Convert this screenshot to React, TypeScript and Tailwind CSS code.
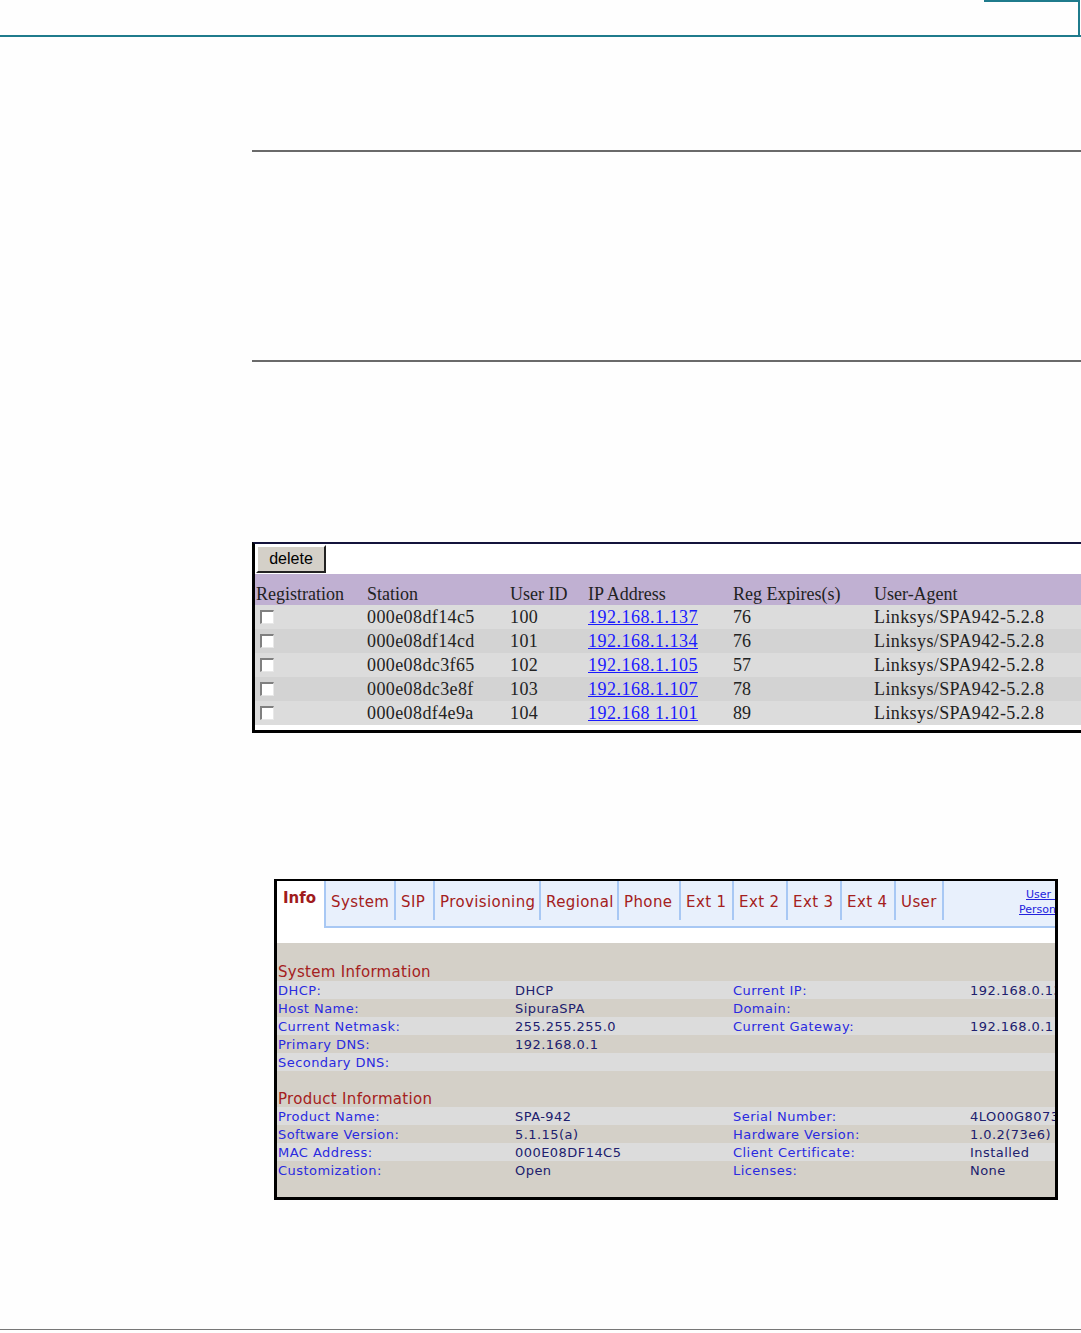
import React from "react";

const regRows = [
  { station: "000e08df14c5", id: "100", ip: "192.168.1.137", exp: "76" },
  { station: "000e08df14cd", id: "101", ip: "192.168.1.134", exp: "76" },
  { station: "000e08dc3f65", id: "102", ip: "192.168.1.105", exp: "57" },
  { station: "000e08dc3e8f", id: "103", ip: "192.168.1.107", exp: "78" },
  { station: "000e08df4e9a", id: "104", ip: "192.168 1.101", exp: "89" },
];

const tabs = [
  { name: "System", w: "w-[70px]" },
  { name: "SIP", w: "w-[39px]" },
  { name: "Provisioning", w: "w-[106px]" },
  { name: "Regional", w: "w-[78px]" },
  { name: "Phone", w: "w-[62px]" },
  { name: "Ext 1", w: "w-[53px]" },
  { name: "Ext 2", w: "w-[54px]" },
  { name: "Ext 3", w: "w-[54px]" },
  { name: "Ext 4", w: "w-[54px]" },
  { name: "User", w: "w-[48px]" },
];

const systemRows: [string, string, string, string][] = [
  ["DHCP:", "DHCP", "Current IP:", "192.168.0.131"],
  ["Host Name:", "SipuraSPA", "Domain:", ""],
  ["Current Netmask:", "255.255.255.0", "Current Gateway:", "192.168.0.1"],
  ["Primary DNS:", "192.168.0.1", "", ""],
  ["Secondary DNS:", "", "", ""],
];

const productRows: [string, string, string, string][] = [
  ["Product Name:", "SPA-942", "Serial Number:", "4LO00G807366"],
  ["Software Version:", "5.1.15(a)", "Hardware Version:", "1.0.2(73e6)"],
  ["MAC Address:", "000E08DF14C5", "Client Certificate:", "Installed"],
  ["Customization:", "Open", "Licenses:", "None"],
];

function Checkbox() {
  return (
    <span className="mt-[-4px] ml-[5px] inline-block h-[14px] w-[14px] border-t-2 border-l-2 border-t-[#808080] border-l-[#808080] border-b border-r border-b-[#e8e8e8] border-r-[#e8e8e8] bg-white align-middle" />
  );
}

function InfoRows({ rows }: { rows: [string, string, string, string][] }) {
  return (
    <>
      {rows.map((r, i) => (
        <div
          key={r[0]}
          className={`grid h-[18px] grid-cols-[237px_218px_237px_1fr] items-center whitespace-nowrap pl-px tracking-[0.45px] ${
            i % 2 === 0 ? "bg-[#dcdcdc]" : "bg-[#d4d0c8]"
          }`}
        >
          <span className="text-[#2a2ae0]">{r[0]}</span>
          <span className="text-[#20206e]">{r[1]}</span>
          <span className="text-[#2a2ae0]">{r[2]}</span>
          <span className="text-[#20206e]">{r[3]}</span>
        </div>
      ))}
    </>
  );
}

export default function App() {
  return (
    <div className="w-[1081px] h-[1333px] overflow-hidden bg-[#fefefe]">
      <div className="flex h-[37px] justify-end border-b-2 border-[#1f7b8c]">
        <div className="mr-px h-full w-[96px] border-t-2 border-r-2 border-[#1f7b8c]" />
      </div>

      <div className="pl-[252px]">
        <div className="mt-[113px] h-[210px] border-t-2 border-[#6a6a6a]" />
        <div className="border-t-2 border-[#6a6a6a]" />

        <div className="mt-[180px] w-[860px] border-t-2 border-l-[3px] border-b-[3px] border-t-[#14143c] border-l-black border-b-black bg-white font-['Liberation_Serif',serif] text-[18px] text-[#222]">
          <div className="h-[30px] pt-px pl-px">
            <button
              type="button"
              className="h-[28px] w-[70px] border-2 border-t-white border-l-white border-b-[#222] border-r-[#222] bg-[#d4d0c8] font-['Liberation_Sans',sans-serif] text-[16px] leading-none text-black"
            >
              delete
            </button>
          </div>
          <div className="grid h-[31px] grid-cols-[112px_143px_78px_145px_141px_1fr] items-end bg-[#c0b0d2] pb-[2px] leading-none">
            <span className="pl-px">Registration</span>
            <span>Station</span>
            <span>User ID</span>
            <span>IP Address</span>
            <span>Reg Expires(s)</span>
            <span>User-Agent</span>
          </div>
          {regRows.map((r, i) => (
            <div
              key={r.station}
              className={`grid h-[24px] grid-cols-[112px_143px_78px_145px_141px_1fr] items-center leading-none ${
                i % 2 === 0 ? "bg-[#dcdcdc]" : "bg-[#d3d3d3]"
              }`}
            >
              <span>
                <Checkbox />
              </span>
              <span className="tracking-[0.4px]">{r.station}</span>
              <span className="tracking-[0.4px]">{r.id}</span>
              <span className="tracking-[0.5px] text-[#1a1aff] underline">{r.ip}</span>
              <span>{r.exp}</span>
              <span className="tracking-[0.4px]">Linksys/SPA942-5.2.8</span>
            </div>
          ))}
          <div className="h-[5px]" />
        </div>

        <div className="mt-[146px] ml-[22px] w-[784px] overflow-hidden border-[3px] border-t-2 border-black bg-[#d4d0c8] font-['DejaVu_Sans',sans-serif] text-[13px]">
          <div className="flex h-[47px] bg-white">
            <div className="w-[47px] pt-[6px] pl-[6px] text-[15px] font-bold text-[#a01c1c]">Info</div>
            <div className="flex flex-1 border-l-2 border-b-2 border-[#a8c8f4] bg-[#e8f0fc]">
              {tabs.map((t) => (
                <div
                  key={t.name}
                  className={`flex h-[39px] shrink-0 items-center border-r-2 border-[#a8c8f4] pl-[5px] pt-[3px] text-[15px] tracking-[0.4px] whitespace-nowrap text-[#a42020] ${t.w}`}
                >
                  {t.name}
                </div>
              ))}
              <div className="ml-auto flex w-[36px] flex-col items-start overflow-hidden whitespace-nowrap pt-[6px] text-[11px] leading-[15px] text-[#2222dd] underline">
                <span className="pl-[7px]">User Login</span>
                <span>Personal Directory</span>
              </div>
            </div>
          </div>
          <div className="h-[15px] bg-white" />
          <div className="h-[20px]" />
          <div className="flex h-[18px] items-center pl-px text-[15px] tracking-[0.3px] text-[#a42020]">System Information</div>
          <InfoRows rows={systemRows} />
          <div className="h-[18px]" />
          <div className="flex h-[18px] items-center pl-px pt-[2px] text-[15px] tracking-[0.3px] text-[#a42020]">Product Information</div>
          <InfoRows rows={productRows} />
          <div className="h-[18px]" />
        </div>
      </div>

      <div className="mt-[129px] border-t border-[#777]" />
    </div>
  );
}
